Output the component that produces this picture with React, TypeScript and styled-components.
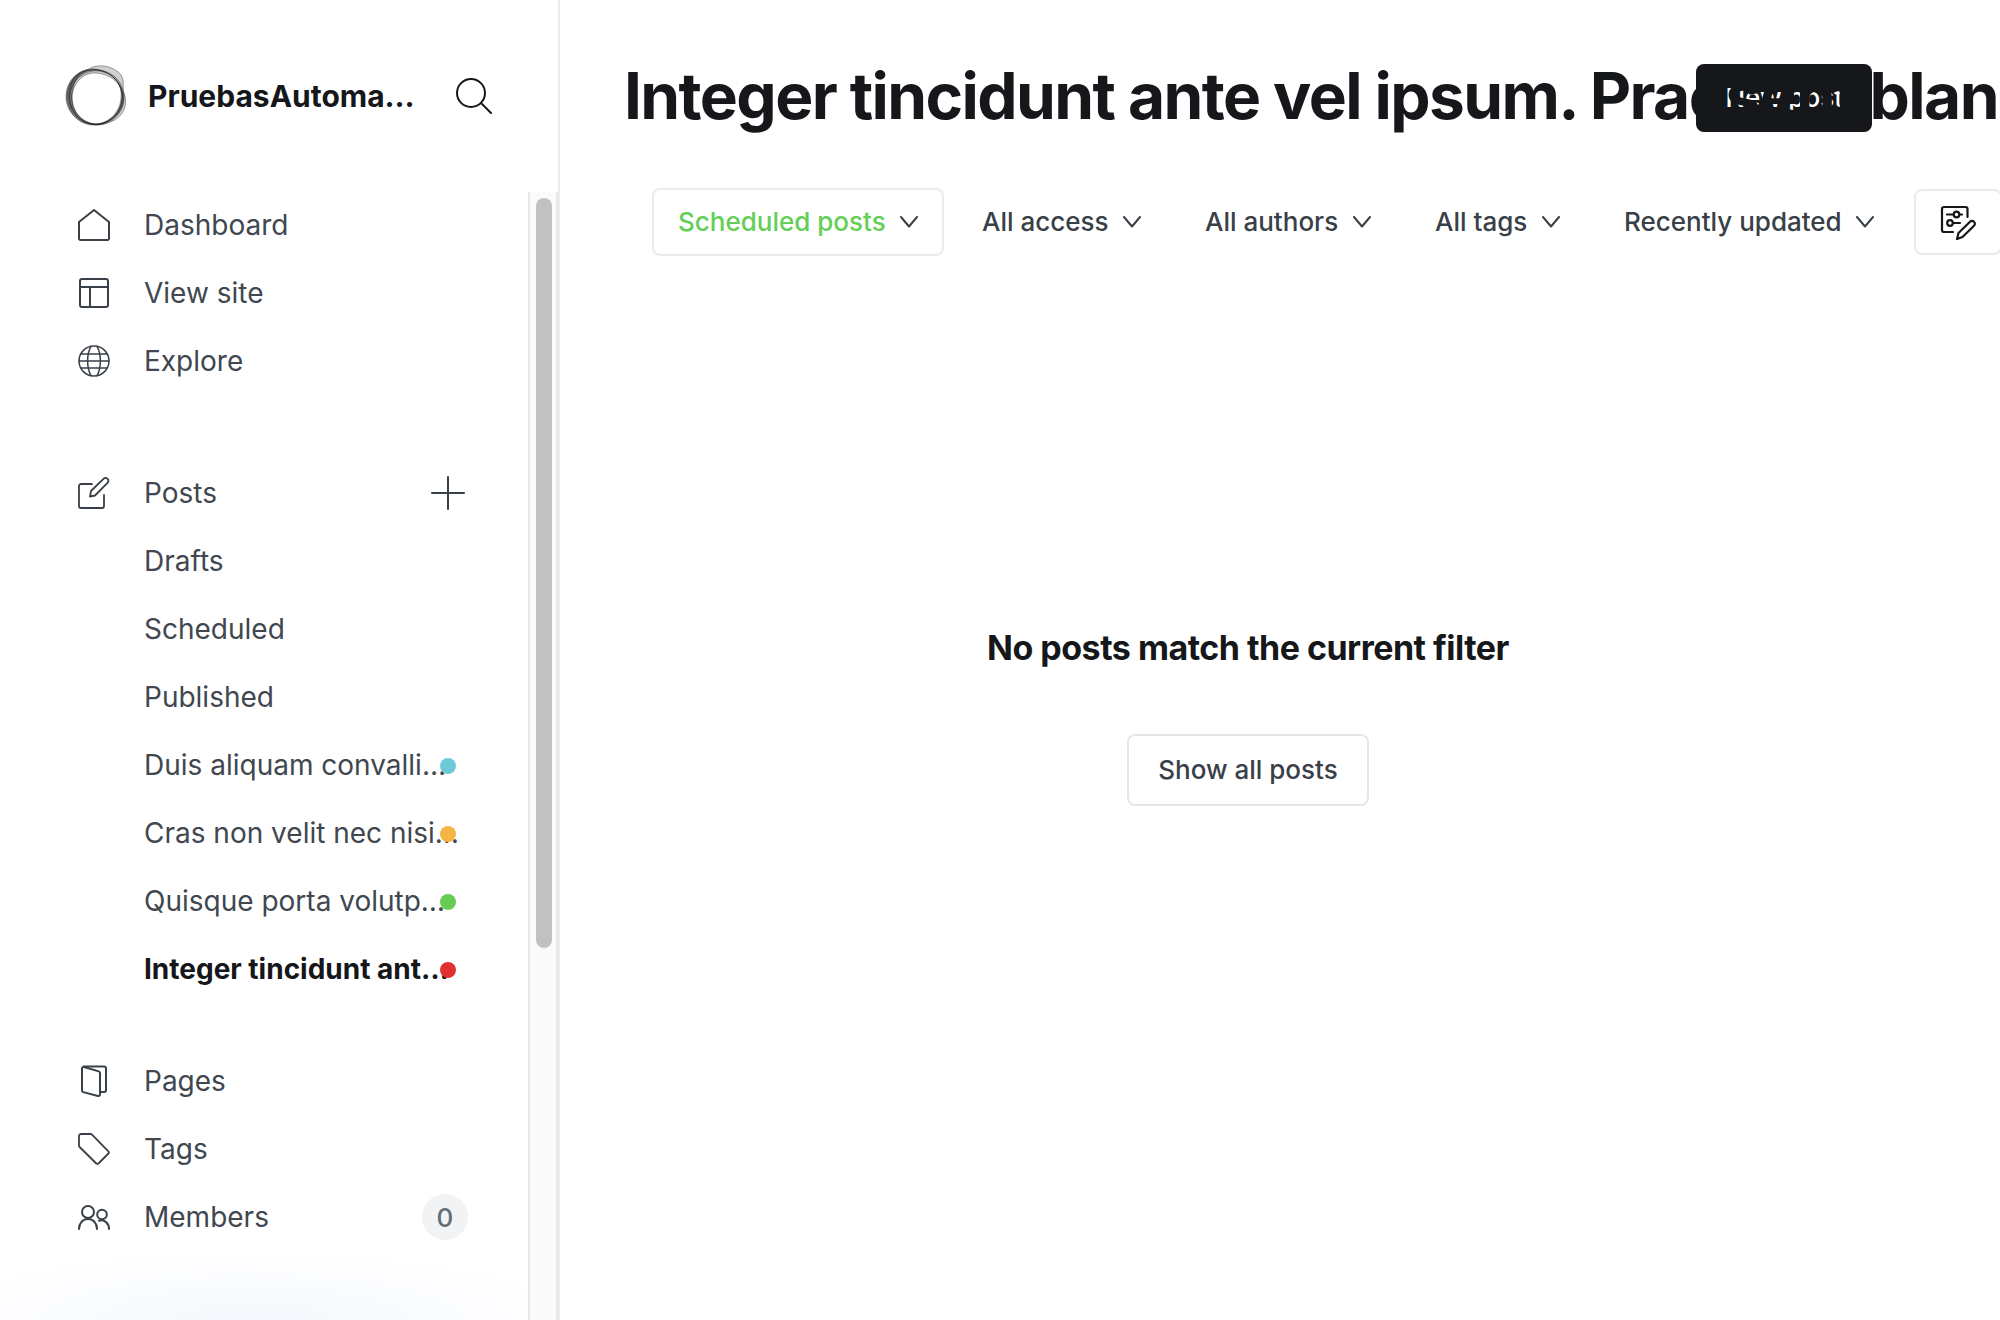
import React from 'react';
import styled, { createGlobalStyle } from 'styled-components';

const ink = '#15171a';
const slate = '#394047';
const line = '#ebebeb';

const GlobalStyle = createGlobalStyle`
  * { box-sizing: border-box; }
  body {
    margin: 0;
    background: #ffffff;
    color: ${ink};
    font-family: Inter, "Liberation Sans", sans-serif;
    font-size: 28px;
    overflow: hidden;
  }
  a { color: inherit; text-decoration: none; }
  button, select { font: inherit; color: inherit; cursor: pointer; }
  h1, h2, ul { margin: 0; padding: 0; }
  ul { list-style: none; }
  svg { display: block; flex: none; }
`;

const Shell = styled.div`
  display: grid;
  grid-template-columns: 560px minmax(0, 1fr);
  height: 100vh;
  overflow: hidden;
`;

const Sidebar = styled.aside`
  display: flex;
  flex-direction: column;
  min-height: 0;
  border-right: 2px solid ${line};
`;

const SiteHeader = styled.header`
  display: flex;
  align-items: center;
  gap: 20px;
  height: 192px;
  flex: none;
  padding: 0 66px 0 64px;
`;

const SiteName = styled.div`
  flex: 1;
  min-width: 0;
  font-size: 30px;
  font-weight: 700;
  white-space: nowrap;
`;

const IconButton = styled.button`
  display: flex;
  padding: 0;
  border: 0;
  background: none;
`;

const SidebarBody = styled.div`
  display: flex;
  flex: 1;
  min-height: 0;
`;

const Nav = styled.nav`
  display: flex;
  flex-direction: column;
  flex: 1;
  min-width: 0;
  padding: 0 60px 0 78px;
  overflow: hidden;
  background: radial-gradient(ellipse 340px 72px at 48% 100%, #f4f8fd 0%, #f7fafd 35%, #fcfdff 65%, #ffffff 100%) no-repeat;
`;

const Group = styled.ul<{ $before?: number }>`
  margin-top: ${(p) => p.$before ?? 0}px;
`;

const Row = styled.li`
  position: relative;
  display: flex;
  align-items: center;
  height: 68px;
  padding-bottom: 2px;
`;

const NavLink = styled.a<{ $nested?: boolean; $active?: boolean }>`
  display: flex;
  align-items: center;
  gap: 34px;
  flex: 1;
  min-width: 0;
  padding-left: ${(p) => (p.$nested ? 66 : 0)}px;
  color: ${(p) => (p.$active ? ink : '#40474f')};
  font-weight: ${(p) => (p.$active ? 700 : 400)};
  white-space: nowrap;
`;

const Dot = styled.span<{ $color: string }>`
  position: absolute;
  right: 12px;
  top: 26px;
  width: 16px;
  height: 16px;
  border-radius: 50%;
  background: ${(p) => p.$color};
`;

const AddButton = styled(IconButton)`
  margin-right: 3px;
`;

const Count = styled.span`
  display: grid;
  place-items: center;
  width: 46px;
  height: 46px;
  border-radius: 50%;
  background: #f1f3f5;
  color: #626d79;
  font-size: 26px;
  font-weight: 500;
`;

const ScrollTrack = styled.div`
  width: 30px;
  flex: none;
  padding: 6px;
  border: solid #e8e8e8;
  border-width: 0 2px;
  background: #fafafa;
`;

const ScrollThumb = styled.div`
  width: 16px;
  height: 67.2%;
  border-radius: 8px;
  background: #c1c1c1;
`;

const Main = styled.main`
  display: flex;
  flex-direction: column;
  min-width: 0;
  padding: 64px 128px 0 64px;
`;

const TitleBar = styled.header`
  display: flex;
  align-items: flex-start;
  height: 68px;
  flex: none;
`;

const Title = styled.h1`
  position: relative;
  z-index: 1;
  flex: 1;
  min-width: 0;
  font-size: 64px;
  line-height: 64px;
  font-weight: 700;
  letter-spacing: -0.025em;
  white-space: nowrap;
  pointer-events: none;
`;

const PrimaryLink = styled.a`
  display: flex;
  align-items: center;
  height: 68px;
  padding: 0 29px 2px;
  border-radius: 8px;
  background: ${ink};
  color: #ffffff;
  font-size: 26px;
  font-weight: 500;
  white-space: nowrap;
`;

const Filters = styled.div`
  display: flex;
  align-items: center;
  gap: 12px;
  margin-top: 56px;
  padding-left: 28px;
`;

const Filter = styled.label<{ $active?: boolean }>`
  display: grid;
  align-items: center;
  flex: none;
  height: 68px;
  border: 2px solid ${(p) => (p.$active ? line : 'transparent')};
  border-radius: 8px;
  color: ${slate};

  & > * { grid-area: 1 / 1; }
  svg {
    justify-self: end;
    margin-right: 24px;
    pointer-events: none;
  }
`;

const Select = styled.select<{ $active?: boolean }>`
  appearance: none;
  height: 64px;
  margin: 0;
  padding: 0 56px 2px 24px;
  border: 0;
  background: none;
  color: ${(p) => (p.$active ? '#63cf56' : slate)};
  font-size: 26px;
  font-weight: 500;
`;

const ViewButton = styled.button`
  display: grid;
  place-items: center;
  flex: none;
  width: 88px;
  height: 66px;
  margin-left: 2px;
  padding: 0;
  border: 2px solid ${line};
  border-radius: 8px;
  background: #ffffff;
`;

const Empty = styled.section`
  display: flex;
  flex-direction: column;
  align-items: center;
  gap: 64px;
  margin-top: 370px;
`;

const EmptyTitle = styled.h2`
  font-size: 34px;
  line-height: 44px;
  font-weight: 700;
  letter-spacing: -0.015em;
`;

const OutlineLink = styled.a`
  display: flex;
  align-items: center;
  height: 72px;
  padding: 0 29px 2px;
  border: 2px solid #e6e6e6;
  border-radius: 8px;
  color: ${slate};
  font-size: 26px;
  font-weight: 500;
`;

const Icon = ({ children, size = 32, width = 2, color = slate }: { children: React.ReactNode; size?: number; width?: number; color?: string }) => (
  <svg width={size} height={size} viewBox={`0 0 ${size} ${size}`} fill="none" stroke={color} strokeWidth={width} strokeLinecap="round" strokeLinejoin="round" aria-hidden="true">
    {children}
  </svg>
);

const HomeIcon = () => (
  <Icon><path d="M1 13v16.500a1.500 1.500 0 0 0 1.500 1.500h27a1.500 1.500 0 0 0 1.500-1.500V13L16 1Z" /></Icon>
);
const SiteIcon = () => (
  <Icon><rect x="2" y="2" width="28" height="28" rx="2" /><path d="M2 10h28M12 10v20" /></Icon>
);
const GlobeIcon = () => (
  <Icon width={1.5}><circle cx="16" cy="16" r="15" /><path d="M1 16h30M3 9h26M3 23h26M13 1.300C8.500 9 8.500 23 13 30.700M19 1.300c4.500 7.700 4.500 21.700 0 29.400" /></Icon>
);
const PostIcon = () => (
  <Icon width={1.8}><path d="M14 7H3a2 2 0 0 0-2 2v20a2 2 0 0 0 2 2h21a2 2 0 0 0 2-2V18" /><path d="M12 19.500l1-5.500L25.500 1.800a2.600 2.600 0 0 1 4 0 2.600 2.600 0 0 1 0 4L17 18.500Z" /></Icon>
);
const PagesIcon = () => (
  <Icon><path d="M5.500 1.500H26a2 2 0 0 1 2 2V25a2 2 0 0 1-2 2h-4" /><path d="M4 3.500v22c0 .8.500 1.400 1.200 1.600L20 31a1.600 1.600 0 0 0 2-1.500V8c0-.8-.5-1.400-1.200-1.600L6 2c-1-.3-2 .5-2 1.500Z" /></Icon>
);
const TagIcon = () => (
  <Icon width={1.8}><path d="M3 1h9.500a2 2 0 0 1 1.500.6L30.400 18.300a1.500 1.500 0 0 1 0 2.200l-9.900 10a1.500 1.500 0 0 1-2.200 0L1.600 14A2 2 0 0 1 1 12.500V3a2 2 0 0 1 2-2Z" /></Icon>
);
const MembersIcon = () => (
  <Icon><circle cx="10" cy="11" r="6" /><path d="M1 28C1 22 5 18 10 18s9 4 9 10" /><circle cx="24" cy="13.500" r="4.800" /><path d="M21 19.700c5.500-1.500 10 2.500 10 8.300" /></Icon>
);
const PlusIcon = () => (
  <Icon size={34}><path d="M17 1v32M1 17h32" /></Icon>
);
const SearchIcon = () => (
  <Icon size={36} color={ink}><circle cx="15" cy="15" r="14" /><path d="M25 25l10 10" /></Icon>
);
const ChevronIcon = () => (
  <svg width="18" height="12" viewBox="0 0 18 12" fill="none" stroke={slate} strokeWidth="2" strokeLinecap="round" strokeLinejoin="round" aria-hidden="true"><path d="M1 1l8 9.500L17 1" /></svg>
);
const CustomizeIcon = () => (
  <Icon size={36} width={2.2} color={ink}>
    <path d="M27.500 13V5a2 2 0 0 0-2-2H4a2 2 0 0 0-2 2v21a2 2 0 0 0 2 2h9" />
    <path d="M7 10.500h6M20 10.500h2M13 19h7" />
    <circle cx="16.500" cy="10.500" r="2.800" /><circle cx="10" cy="19" r="2.800" />
    <path d="M17 35l1.500-6L30 17.700a2.700 2.700 0 0 1 4 0 2.700 2.700 0 0 1 0 4L22.500 33Z" />
  </Icon>
);

const Logo = () => (
  <svg width="64" height="64" viewBox="0 0 64 64" fill="#000" stroke="#000" strokeWidth="0.7" fillRule="evenodd" role="img" aria-label="Site logo">
    <path fillOpacity="0.4" strokeOpacity="0.45" d="M2 31C3 16 14 6 27 5c14-1 28 9 32 24 4 17-11 31-28 32S1 46 2 31ZM8 34c0 14 11 26 24 26s27-12 26-29C57 17 45 6 30 6S8 19 8 34Z" />
    <path fillOpacity="0.18" strokeOpacity="0.55" d="M25 5C34-1 50 2 57 11c4 7 1 12 3 18 5 13-2 25-14 29-14 6-29 2-36-10C2 38 4 20 13 11c4-4 8-4 12-6ZM32 9C20 8 10 18 8 31c-1 15 9 28 24 29 14 0 25-11 26-27C59 20 47 10 32 9Z" />
    <path fillOpacity="0.25" strokeOpacity="0.4" d="M26 6c16-2 31 7 33 21 5 16-8 33-25 34C18 61 4 50 3 34 3 18 12 8 26 6ZM34 7C20 6 7 17 6 31c-1 15 10 29 25 29 12 0 26-11 26-28C58 20 50 9 34 7Z" />
  </svg>
);

type Sub = { label: string; color?: string; active?: boolean };
const views: Sub[] = [
  { label: 'Drafts' },
  { label: 'Scheduled' },
  { label: 'Published' },
  { label: 'Duis aliquam convalli…', color: '#6fc8d8' },
  { label: 'Cras non velit nec nisi…', color: '#f5b545' },
  { label: 'Quisque porta volutp…', color: '#66cc55' },
  { label: 'Integer tincidunt ant…', color: '#e13030', active: true },
];

const filters = ['Scheduled posts', 'All access', 'All authors', 'All tags', 'Recently updated'];

export default function App() {
  return (
    <>
      <GlobalStyle />
      <Shell>
        <Sidebar>
          <SiteHeader>
            <Logo />
            <SiteName>PruebasAutoma…</SiteName>
            <IconButton aria-label="Search site"><SearchIcon /></IconButton>
          </SiteHeader>
          <SidebarBody>
            <Nav>
              <Group>
                <Row><NavLink href="#dashboard"><HomeIcon />Dashboard</NavLink></Row>
                <Row><NavLink href="#site"><SiteIcon />View site</NavLink></Row>
                <Row><NavLink href="#explore"><GlobeIcon />Explore</NavLink></Row>
              </Group>
              <Group $before={64}>
                <Row>
                  <NavLink href="#posts"><PostIcon />Posts</NavLink>
                  <AddButton aria-label="Add post"><PlusIcon /></AddButton>
                </Row>
                {views.map((v) => (
                  <Row key={v.label}>
                    <NavLink href="#view" $nested $active={v.active}>{v.label}</NavLink>
                    {v.color && <Dot $color={v.color} />}
                  </Row>
                ))}
              </Group>
              <Group $before={44}>
                <Row><NavLink href="#pages"><PagesIcon />Pages</NavLink></Row>
                <Row><NavLink href="#tags"><TagIcon />Tags</NavLink></Row>
                <Row><NavLink href="#members"><MembersIcon />Members</NavLink><Count>0</Count></Row>
              </Group>
            </Nav>
            <ScrollTrack><ScrollThumb /></ScrollTrack>
          </SidebarBody>
        </Sidebar>
        <Main>
          <TitleBar>
            <Title>Integer tincidunt ante vel ipsum. Praesent blandit</Title>
            <PrimaryLink href="#new">New post</PrimaryLink>
          </TitleBar>
          <Filters>
            {filters.map((f, i) => (
              <Filter key={f} $active={i === 0}>
                <Select $active={i === 0} aria-label={f}><option>{f}</option></Select>
                <ChevronIcon />
              </Filter>
            ))}
            <ViewButton aria-label="Edit view"><CustomizeIcon /></ViewButton>
          </Filters>
          <Empty>
            <EmptyTitle>No posts match the current filter</EmptyTitle>
            <OutlineLink href="#all">Show all posts</OutlineLink>
          </Empty>
        </Main>
      </Shell>
    </>
  );
}
